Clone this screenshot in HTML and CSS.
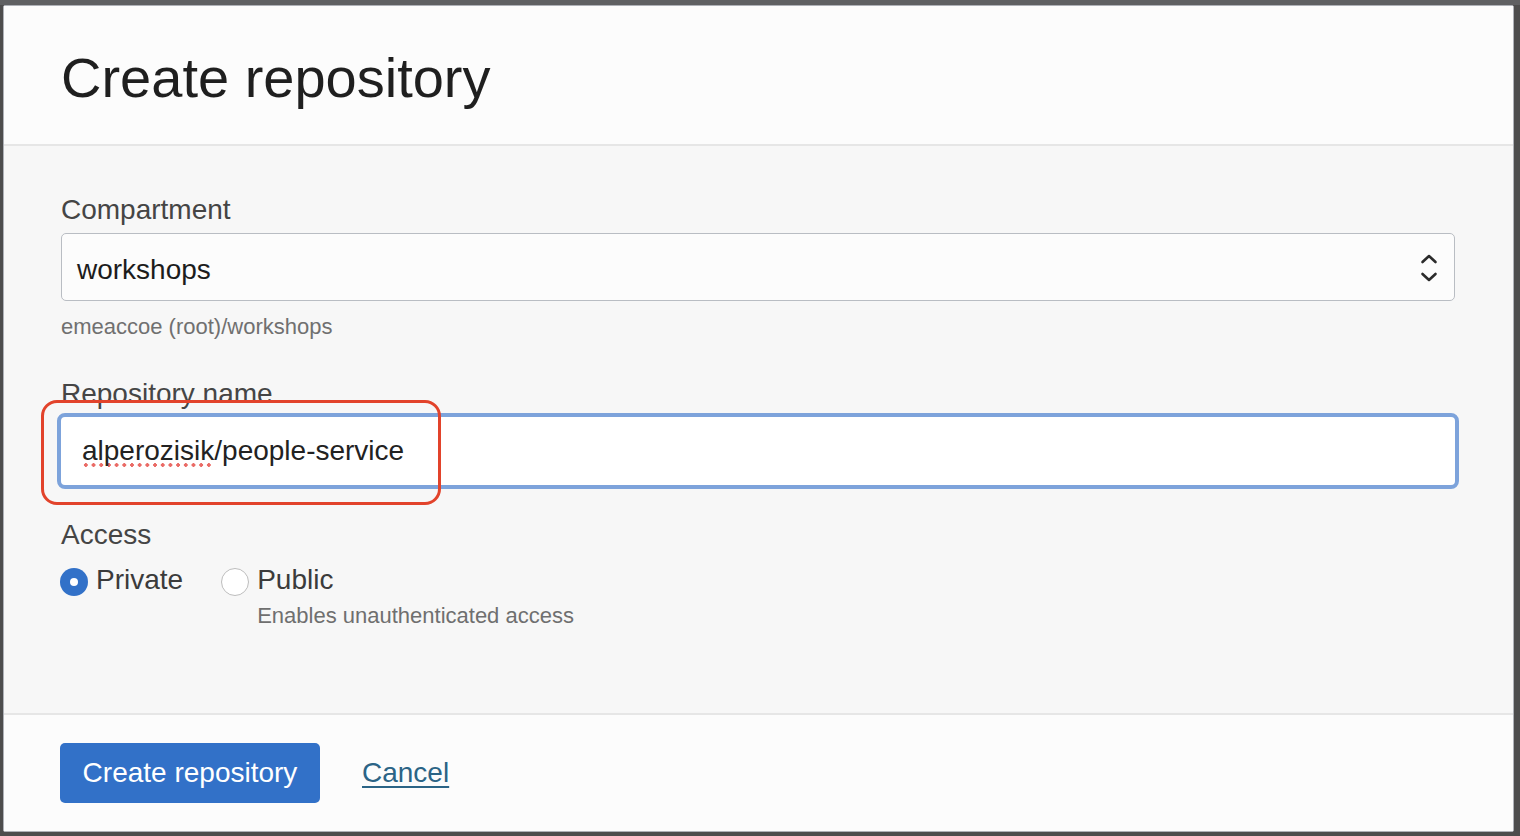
FILE: index.html
```html
<!DOCTYPE html>
<html lang="en">
<head>
<meta charset="utf-8">
<title>Create repository</title>
<link rel="stylesheet" href="styles.css">
</head>
<body>
<div class="backdrop">
  <div class="modal">
    <header class="modal-header">
      <h1 class="title">Create repository</h1>
    </header>
    <main class="modal-body">
      <div class="field">
        <label class="label">Compartment</label>
        <div class="select">
          <span class="select-value">workshops</span>
          <svg class="chevrons" width="18" height="28" viewBox="0 0 18 28" aria-hidden="true">
            <path d="M2.5 8 L9 2 L15.5 8" fill="none" stroke="#2b2b2b" stroke-width="2.6" stroke-linecap="round" stroke-linejoin="round"/>
            <path d="M2.5 20 L9 26 L15.5 20" fill="none" stroke="#2b2b2b" stroke-width="2.6" stroke-linecap="round" stroke-linejoin="round"/>
          </svg>
        </div>
        <div class="help">emeaccoe (root)/workshops</div>
      </div>

      <div class="field field-name">
        <label class="label">Repository name</label>
        <div class="input-wrap">
          <div class="text-input"><span class="misspelled">alperozisik</span>/people-service</div>
          <div class="annotation"></div>
        </div>
      </div>

      <div class="field field-access">
        <label class="label">Access</label>
        <div class="radios">
          <div class="radio-option">
            <span class="radio radio-checked"></span>
            <span class="radio-label">Private</span>
          </div>
          <div class="radio-option">
            <span class="radio"></span>
            <div class="radio-text">
              <span class="radio-label">Public</span>
              <span class="radio-help">Enables unauthenticated access</span>
            </div>
          </div>
        </div>
      </div>
    </main>
    <footer class="modal-footer">
      <button class="btn-primary" type="button">Create repository</button>
      <a class="link" href="#">Cancel</a>
    </footer>
  </div>
</div>
</body>
</html>
```

FILE: styles.css
```css
* { box-sizing: border-box; }

html, body {
  margin: 0;
  padding: 0;
  height: 100%;
}

body {
  background: #4e4e4e;
  font-family: "Liberation Sans", Arial, Helvetica, sans-serif;
  overflow: hidden;
}

.backdrop {
  height: 836px;
  padding: 5px 0 0 3px;
  background: linear-gradient(#5f6062 0, #5f6062 5px, #4d4d4d 5px);
}

.modal {
  width: 1511px;
  height: 827px;
  border: 1px solid #aeb1b7;
  border-radius: 2px;
  background: #f7f7f7;
  display: flex;
  flex-direction: column;
}

.modal-header {
  height: 140px;
  padding: 44px 57px 0;
  background: #fcfcfc;
  border-bottom: 2px solid #e6e6e6;
  flex: none;
}

.title {
  margin: 0;
  font-size: 56px;
  line-height: 56px;
  font-weight: 400;
  color: #1f1f1f;
  letter-spacing: 0;
}

.modal-body {
  flex: 1;
  padding: 47px 58px 0 57px;
  background: #f7f7f7;
}

.field { display: flex; flex-direction: column; }

.label {
  font-size: 28px;
  line-height: 34px;
  color: #454545;
}

.select {
  margin-top: 6px;
  height: 68px;
  border: 1px solid #b9bdc3;
  border-radius: 5px;
  background: #fcfcfc;
  display: flex;
  align-items: center;
  justify-content: space-between;
  padding: 0 16px 0 15px;
}

.select-value {
  font-size: 28px;
  color: #1c1c1c;
  line-height: 34px;
  margin-top: 5px;
}

.chevrons { display: block; margin-top: 1px; }

.help {
  margin-top: 13px;
  font-size: 22px;
  line-height: 26px;
  color: #707070;
}

.field-name { margin-top: 37px; }

.input-wrap {
  position: relative;
  margin: 2px -4px 0;
}

.text-input {
  height: 76px;
  border: 4px solid #7da3db;
  border-radius: 8px;
  background: #ffffff;
  padding: 0 20px 0 21px;
  display: flex;
  align-items: center;
  font-size: 28px;
  color: #222222;
  line-height: 34px;
}

.misspelled {
  background-image: radial-gradient(circle, #ea6b66 1.6px, transparent 2px);
  background-size: 7.7px 6px;
  background-repeat: repeat-x;
  background-position: 0 100%;
  padding-bottom: 0;
}

.annotation {
  position: absolute;
  left: -16px;
  top: -13px;
  width: 400px;
  height: 105px;
  border: 3.5px solid #e2432b;
  border-radius: 16px;
  pointer-events: none;
}

.field-access { margin-top: 29px; }

.radios {
  margin-top: 11px;
  display: flex;
  gap: 38px;
}

.radio-option {
  display: flex;
  align-items: flex-start;
  gap: 8px;
}

.radio {
  width: 28px;
  height: 28px;
  margin-top: 5px;
  border-radius: 50%;
  border: 1.5px solid #bdbdbd;
  background: #ffffff;
  flex: none;
  position: relative;
}

.radio-checked {
  border: none;
  background: #3271c8;
  margin-left: -1px;
}

.radio-checked::after {
  content: "";
  position: absolute;
  left: 50%;
  top: 50%;
  width: 8px;
  height: 8px;
  margin: -4px 0 0 -4px;
  border-radius: 50%;
  background: #ffffff;
}

.radio-label {
  font-size: 28px;
  line-height: 34px;
  color: #3b3b3b;
}

.radio-text {
  display: flex;
  flex-direction: column;
  gap: 6px;
}

.radio-help {
  font-size: 22px;
  line-height: 26px;
  color: #6f6f6f;
}

.modal-footer {
  flex: none;
  height: 118px;
  border-top: 2px solid #e6e6e6;
  background: #fcfcfc;
  padding: 28px 57px 0 56px;
  display: flex;
  align-items: flex-start;
  gap: 42px;
}

.btn-primary {
  height: 60px;
  width: 260px;
  border: none;
  border-radius: 5px;
  background: #3271c8;
  color: #ffffff;
  font-family: inherit;
  font-size: 28px;
  padding: 0;
  cursor: pointer;
}

.link {
  margin-top: 13px;
  font-size: 28px;
  line-height: 34px;
  color: #2b6486;
  text-decoration: underline;
  text-underline-offset: 4px;
  text-decoration-thickness: 2px;
}
```
